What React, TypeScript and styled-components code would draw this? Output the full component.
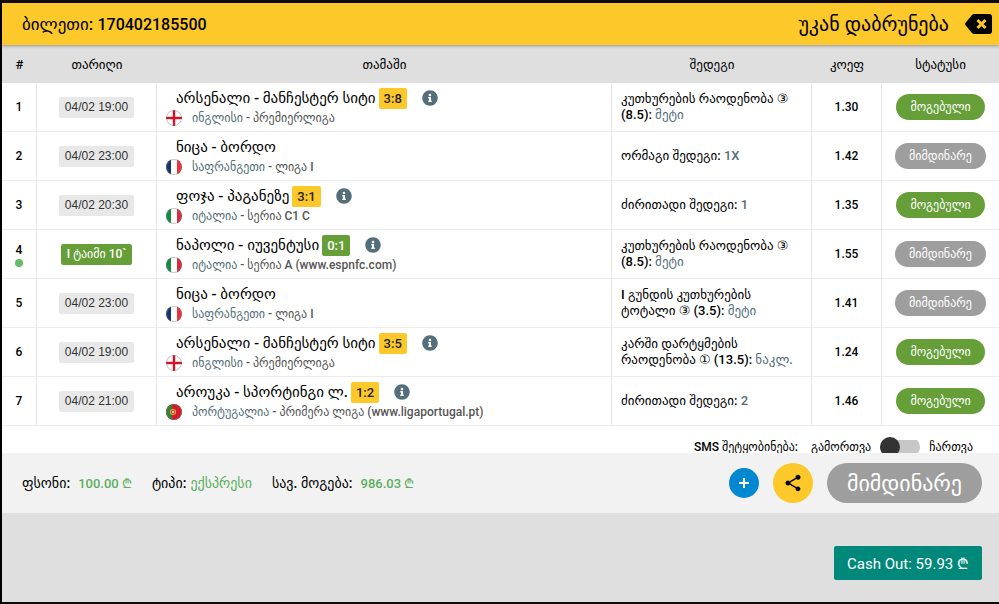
import React from 'react';
import styled, { createGlobalStyle } from 'styled-components';
import { FaInfoCircle } from 'react-icons/fa';
import { MdShare } from 'react-icons/md';

const GlobalStyle = createGlobalStyle`
  * { box-sizing: border-box; }
  body {
    margin: 0;
    background: #0a0808;
    color: #000;
    font-family: Roboto, 'DejaVu Sans', sans-serif;
    font-size: 12px;
  }
  button, input { font: inherit; }
`;

const Page = styled.div`
  display: flex;
  flex-direction: column;
  min-height: 100vh;
  border-top: 3px solid #120b0d;
  border-left: 2px solid #000;
`;

const TitleBar = styled.header`
  display: flex;
  align-items: center;
  justify-content: space-between;
  height: 42px;
  padding: 0 7px 0 20px;
  background: #fdc82a;
  box-shadow: 0 1px 3px rgba(0, 0, 0, 0.35);
  z-index: 1;
`;

const Title = styled.h1`
  margin: 0;
  font-size: 17px;
  font-weight: 500;
`;

const TicketNumber = styled.span`
  font-size: 16px;
`;

const BackButton = styled.button`
  display: flex;
  align-items: center;
  gap: 16px;
  padding: 0;
  border: 0;
  background: none;
  color: #000;
  font-size: 20px;
  cursor: pointer;
`;

const Bets = styled.table`
  width: 100%;
  table-layout: fixed;
  border-collapse: separate;
  border-spacing: 0;
  background: #fff;
`;

const Col = styled.col<{ $w?: number }>`
  width: ${(p) => (p.$w ? `${p.$w}px` : 'auto')};
`;

const HeadCell = styled.th`
  height: 38px;
  padding: 0;
  background: #dfdfdf;
  font-size: 13px;
  font-weight: 500;
`;

const Cell = styled.td<{ $left?: boolean }>`
  height: 49px;
  padding: ${(p) => (p.$left ? '0 9px' : '0')};
  border-right: 1px solid #e8e8e8;
  border-bottom: 1px solid #ececec;
  text-align: ${(p) => (p.$left ? 'left' : 'center')};
  font-size: ${(p) => (p.$left ? 13 : 12)}px;
  font-weight: 500;
  line-height: 16px;
  &:last-child { border-right: 0; }
`;

const LiveDot = styled.span`
  display: block;
  width: 8px;
  height: 8px;
  margin: 1px auto 0;
  border-radius: 50%;
  background: #66bb6a;
`;

const Tag = styled.span<{ $kind: 'date' | 'score' | 'live' }>`
  display: inline-block;
  height: 21px;
  padding: 0 6px;
  border-radius: 2px;
  line-height: 21px;
  font-size: 12px;
  font-weight: ${(p) => (p.$kind === 'date' ? 400 : 500)};
  font-family: ${(p) => (p.$kind === 'date' ? "'Liberation Sans', sans-serif" : 'inherit')};
  color: ${(p) => ({ date: '#333', score: '#222', live: '#fff' })[p.$kind]};
  background: ${(p) => ({ date: '#e8e8e8', score: '#fdc82a', live: '#669f38' })[p.$kind]};
`;

const Teams = styled.div`
  display: flex;
  align-items: center;
  height: 21px;
  padding-left: 10px;
  gap: 3px;
  font-size: 15px;
  svg { margin-left: 12px; color: #546e7a; }
  ${Tag} { padding: 0 5px; font-size: 13px; }
`;

const League = styled.div`
  display: flex;
  align-items: center;
  height: 18px;
  gap: 10px;
  color: #555;
  font-size: 12px;
`;

const Accent = styled.span`
  color: #546e7a;
`;

const Status = styled.span<{ $won: boolean }>`
  display: inline-block;
  height: 26px;
  padding: 0 14px;
  border-radius: 13px;
  background: ${(p) => (p.$won ? '#669f38' : '#9e9e9e')};
  color: #fff;
  font-size: 12px;
  line-height: 26px;
`;

const SmsRow = styled.div`
  display: flex;
  justify-content: flex-end;
  align-items: flex-start;
  height: 27px;
  padding: 11px 26px 0 0;
  gap: 13px;
  overflow: hidden;
  background: #fff;
  font-weight: 500;
  line-height: 20px;
`;

const Switch = styled.input`
  appearance: none;
  width: 40px;
  height: 20px;
  margin: 0 -4px;
  background: linear-gradient(#c7c7c7, #c7c7c7) center / 40px 14px no-repeat;
  border-radius: 10px;
  cursor: pointer;
  &::before {
    content: '';
    display: block;
    width: 20px;
    height: 20px;
    border-radius: 50%;
    background: #333;
  }
  &:checked::before { margin-left: 20px; }
`;

const Summary = styled.section`
  display: flex;
  align-items: center;
  justify-content: space-between;
  height: 60px;
  padding: 0 17px 0 20px;
  background: #f2f2f2;
  font-size: 14px;
  font-weight: 500;
`;

const Group = styled.div<{ $gap: number }>`
  display: flex;
  align-items: center;
  gap: ${(p) => p.$gap}px;
`;

const Amount = styled.span`
  color: #5cae60;
  font-size: 13px;
`;

const BetType = styled(Amount)`
  font-size: 14px;
`;

const RoundButton = styled.button<{ $size: number; $bg: string }>`
  display: flex;
  align-items: center;
  justify-content: center;
  width: ${(p) => p.$size}px;
  height: ${(p) => p.$size}px;
  padding: 0;
  border: 0;
  border-radius: 50%;
  background: ${(p) => p.$bg};
  color: ${(p) => (p.$size > 30 ? '#000' : '#fff')};
  cursor: pointer;
`;

const TicketStatus = styled.div`
  display: flex;
  align-items: center;
  height: 40px;
  padding: 0 20px;
  border-radius: 20px;
  background: #9e9e9e;
  color: #fff;
  font-size: 22px;
`;

const CashArea = styled.footer`
  display: flex;
  flex: 1;
  justify-content: flex-end;
  align-items: flex-start;
  padding: 33px 17px 22px;
  background: #dfdfdf;
  border-bottom: 2px solid #0c0a0a;
`;

const CashButton = styled.button`
  height: 34px;
  padding: 0 13px;
  border: 0;
  border-radius: 2px;
  background: #00897b;
  color: #fff;
  font-size: 15px;
  cursor: pointer;
`;

type Country = 'en' | 'fr' | 'it' | 'pt';

function Flag({ country }: { country: Country }) {
  const id = React.useId();
  return (
    <svg width="16" height="16" viewBox="0 0 16 16" aria-hidden="true">
      <clipPath id={id}><circle cx="8" cy="8" r="8" /></clipPath>
      <g clipPath={`url(#${id})`}>
        <rect width="16" height="16" fill="#fff" />
        {country === 'en' && <path d="M7 0h2v7h7v2H9v7H7V9H0V7h7z" fill="#d80f27" stroke="#d80f27" strokeWidth=".4" />}
        {country === 'fr' && <><path d="M0 0h5v16H0z" fill="#17346f" /><path d="M11 0h5v16h-5z" fill="#e8353c" /></>}
        {country === 'it' && <><path d="M0 0h5v16H0z" fill="#128a48" /><path d="M11 0h5v16h-5z" fill="#d22f3c" /></>}
        {country === 'pt' && (
          <>
            <rect width="16" height="16" fill="#d01c28" />
            <path d="M0 0h6v16H0z" fill="#367f35" />
            <circle cx="7" cy="8" r="3" fill="#d9b64a" />
            <circle cx="7" cy="8" r="2" fill="#c9292f" />
            <circle cx="7" cy="8" r="1" fill="#fff" />
          </>
        )}
      </g>
      <circle cx="8" cy="8" r="7.5" fill="none" stroke="#777" strokeOpacity=".45" />
    </svg>
  );
}

function BackIcon() {
  return (
    <svg width="27" height="20" viewBox="0 0 27 20" aria-hidden="true">
      <path d="M9 0h15a3 3 0 0 1 3 3v14a3 3 0 0 1-3 3H9a3 3 0 0 1-2-1L0.6 11.2a2 2 0 0 1 0-2.4L7 1a3 3 0 0 1 2-1z" fill="#000" />
      <path d="M12.5 6l8 8M20.5 6l-8 8" stroke="#fdc82a" strokeWidth="3" />
    </svg>
  );
}

interface Bet {
  date?: string;
  live?: string;
  teams: string;
  score?: string;
  country: Country;
  place: string;
  league: string;
  market: string;
  pick: string;
  odds: string;
  won: boolean;
}

const bets: Bet[] = [
  { date: '04/02 19:00', teams: 'არსენალი - მანჩესტერ სიტი', score: '3:8', country: 'en', place: 'ინგლისი', league: 'პრემიერლიგა', market: 'კუთხურების რაოდენობა ③ (8.5):', pick: 'მეტი', odds: '1.30', won: true },
  { date: '04/02 23:00', teams: 'ნიცა - ბორდო', country: 'fr', place: 'საფრანგეთი', league: 'ლიგა I', market: 'ორმაგი შედეგი:', pick: '1X', odds: '1.42', won: false },
  { date: '04/02 20:30', teams: 'ფოჯა - პაგანეზე', score: '3:1', country: 'it', place: 'იტალია', league: 'სერია C1 C', market: 'ძირითადი შედეგი:', pick: '1', odds: '1.35', won: true },
  { live: 'I ტაიმი 10`', teams: 'ნაპოლი - იუვენტუსი', score: '0:1', country: 'it', place: 'იტალია', league: 'სერია A (www.espnfc.com)', market: 'კუთხურების რაოდენობა ③ (8.5):', pick: 'მეტი', odds: '1.55', won: false },
  { date: '04/02 23:00', teams: 'ნიცა - ბორდო', country: 'fr', place: 'საფრანგეთი', league: 'ლიგა I', market: 'I გუნდის კუთხურების ტოტალი ③ (3.5):', pick: 'მეტი', odds: '1.41', won: false },
  { date: '04/02 19:00', teams: 'არსენალი - მანჩესტერ სიტი', score: '3:5', country: 'en', place: 'ინგლისი', league: 'პრემიერლიგა', market: 'კარში დარტყმების რაოდენობა ① (13.5):', pick: 'ნაკლ.', odds: '1.24', won: true },
  { date: '04/02 21:00', teams: 'აროუკა - სპორტინგი ლ.', score: '1:2', country: 'pt', place: 'პორტუგალია', league: 'პრიმერა ლიგა (www.ligaportugal.pt)', market: 'ძირითადი შედეგი:', pick: '2', odds: '1.46', won: true },
];

const headings = ['#', 'თარიღი', 'თამაში', 'შედეგი', 'კოეფ', 'სტატუსი'];

function BetRow({ bet, index }: { bet: Bet; index: number }) {
  return (
    <tr>
      <Cell>{index}{bet.live && <LiveDot />}</Cell>
      <Cell><Tag $kind={bet.live ? 'live' : 'date'}>{bet.live ?? bet.date}</Tag></Cell>
      <Cell $left>
        <Teams>
          {bet.teams}
          {bet.score && <Tag $kind={bet.live ? 'live' : 'score'}>{bet.score}</Tag>}
          {bet.score && <FaInfoCircle size={16} />}
        </Teams>
        <League>
          <Flag country={bet.country} />
          <span><Accent>{bet.place}</Accent> - {bet.league}</span>
        </League>
      </Cell>
      <Cell $left>{bet.market} <Accent>{bet.pick}</Accent></Cell>
      <Cell>{bet.odds}</Cell>
      <Cell><Status $won={bet.won}>{bet.won ? 'მოგებული' : 'მიმდინარე'}</Status></Cell>
    </tr>
  );
}

export default function App() {
  return (
    <>
      <GlobalStyle />
      <Page>
        <TitleBar>
          <Title>ბილეთი: <TicketNumber>170402185500</TicketNumber></Title>
          <BackButton type="button">უკან დაბრუნება<BackIcon /></BackButton>
        </TitleBar>
        <Bets>
          <colgroup>
            <Col $w={35} /><Col $w={120} /><Col /><Col $w={200} /><Col $w={70} /><Col $w={117} />
          </colgroup>
          <thead>
            <tr>{headings.map((h) => <HeadCell key={h} scope="col">{h}</HeadCell>)}</tr>
          </thead>
          <tbody>{bets.map((b, i) => <BetRow key={i} bet={b} index={i + 1} />)}</tbody>
        </Bets>
        <SmsRow>
          <span>SMS შეტყობინება:</span>
          <label htmlFor="sms">გამორთვა</label>
          <Switch id="sms" type="checkbox" role="switch" />
          <label htmlFor="sms">ჩართვა</label>
        </SmsRow>
        <Summary>
          <Group $gap={20}>
            <Group $gap={8}><span>ფსონი:</span><Amount>100.00 ₾</Amount></Group>
            <Group $gap={4}><span>ტიპი:</span><BetType>ექსპრესი</BetType></Group>
            <Group $gap={8}><span>სავ. მოგება:</span><Amount>986.03 ₾</Amount></Group>
          </Group>
          <Group $gap={14}>
            <RoundButton type="button" aria-label="დამატება" $size={30} $bg="#0288d1">
              <svg width="12" height="12" viewBox="0 0 12 12"><path d="M6 1v10M1 6h10" stroke="currentColor" strokeWidth="2" /></svg>
            </RoundButton>
            <RoundButton type="button" aria-label="გაზიარება" $size={40} $bg="#fdc82a"><MdShare size={20} /></RoundButton>
            <TicketStatus>მიმდინარე</TicketStatus>
          </Group>
        </Summary>
        <CashArea>
          <CashButton type="button">Cash Out: 59.93 ₾</CashButton>
        </CashArea>
      </Page>
    </>
  );
}
